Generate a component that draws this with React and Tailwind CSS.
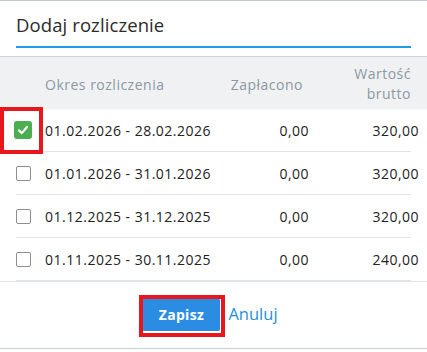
import React from "react";

const rows = [
  { period: "01.02.2026 - 28.02.2026", paid: "0,00", gross: "320,00", checked: true },
  { period: "01.01.2026 - 31.01.2026", paid: "0,00", gross: "320,00", checked: false },
  { period: "01.12.2025 - 31.12.2025", paid: "0,00", gross: "320,00", checked: false },
  { period: "01.11.2025 - 30.11.2025", paid: "0,00", gross: "240,00", checked: false },
];

function Checkbox({ checked }) {
  if (checked) {
    return (
      <span className="flex h-[18px] w-[18px] -ml-[2px] items-center justify-center rounded-[3px] bg-[#4cae50]">
        <svg width="12" height="12" viewBox="0 0 12 12" fill="none">
          <path d="M2 6.4 L4.8 9.1 L10 3" stroke="white" strokeWidth="2.2" strokeLinecap="round" strokeLinejoin="round" />
        </svg>
      </span>
    );
  }
  return <span className="block h-[15px] w-[15px] rounded-[2px] border border-[#8e8e8e] bg-white" />;
}

export default function App() {
  return (
    <div
      className="relative h-[352px] w-[427px] overflow-hidden border-t border-[#c5cbd1] bg-white"
      style={{ fontFamily: '"Open Sans", "Noto Sans", sans-serif' }}
    >
      <div className="mx-4 border-b-2 border-[#1e9be9] pt-[12px] pb-[9px]">
        <h1 className="text-[18.5px] leading-[24px] tracking-[0.1px] text-[#2b2b2b]">Dodaj rozliczenie</h1>
      </div>

      <div className="mt-2 border-t border-[#cfd4d9] bg-[#f0f1f3]">
        <div className="mx-4 grid h-[52px] grid-cols-[29px_1fr_100px_108px] items-center pt-[2px] text-[14px] font-medium tracking-[0.5px] text-[#8c98a4]">
          <div />
          <div className="whitespace-nowrap">Okres rozliczenia</div>
          <div className="text-right">Zapłacono</div>
          <div className="text-right leading-[20px]">
            Wartość
            <br />
            brutto
          </div>
        </div>
      </div>

      <div className="mx-4">
        {rows.map((r, i) => (
          <div
            key={i}
            className="grid h-[43px] grid-cols-[29px_1fr_100px_108px] items-center border-b border-[#e2e5e8] text-[14px] tracking-[0.5px] text-[#222]"
          >
            <div className="flex items-center">
              <Checkbox checked={r.checked} />
            </div>
            <div className="whitespace-nowrap">{r.period}</div>
            <div className="pr-[2px] text-right">{r.paid}</div>
            <div className="text-right">{r.gross}</div>
          </div>
        ))}
      </div>
      <div className="border-t border-[#e2e5e8]" />

      <div className="mt-[16px] flex items-center justify-center gap-[8px] pr-[7px]">
        <button className="h-[33px] w-[78px] rounded-[2px] bg-[#2a8ce2] text-[14px] font-bold tracking-[0.3px] text-white">
          Zapisz
        </button>
        <span className="text-[16.5px] text-[#1f8fd8]">Anuluj</span>
      </div>

      <div className="absolute bottom-[3px] left-0 right-0 border-t border-[#c9d0d6]" />

      <div className="pointer-events-none absolute left-0 top-[106px] h-[47px] w-[43px] border-4 border-[#e8171e]" />
      <div className="pointer-events-none absolute left-[139px] top-[294px] h-[42px] w-[86px] border-4 border-[#e8171e]" />
    </div>
  );
}
